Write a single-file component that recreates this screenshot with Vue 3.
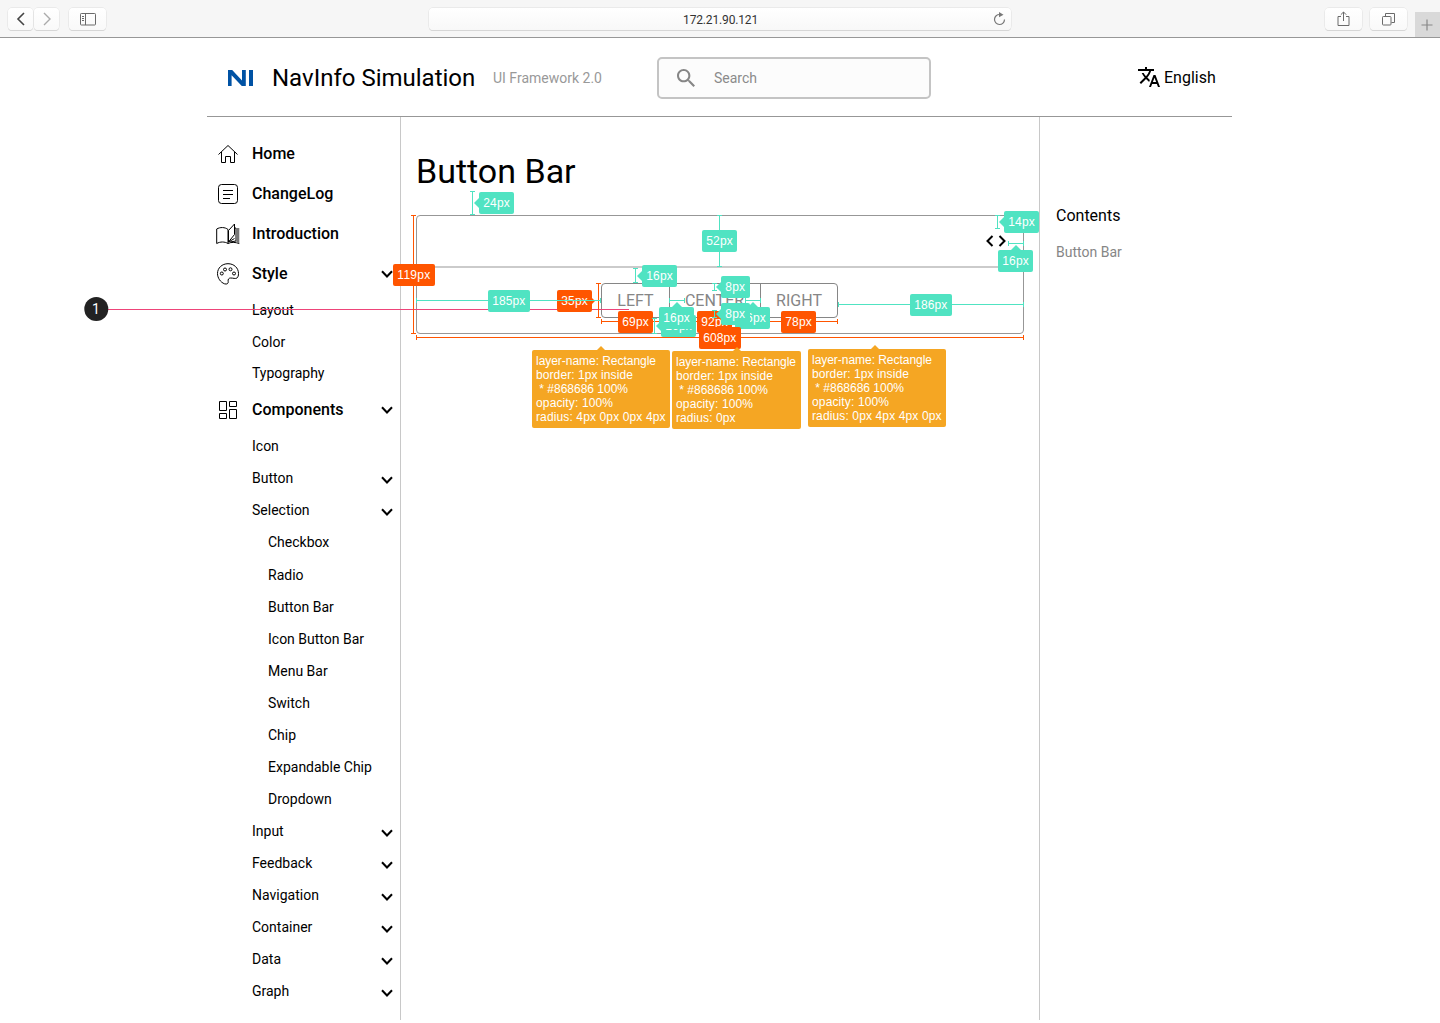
<script setup>
const menu = [
  { t: 'Home', k: 'major', i: 'home' },
  { t: 'ChangeLog', k: 'major', i: 'log' },
  { t: 'Introduction', k: 'major', i: 'book' },
  { t: 'Style', k: 'major', i: 'palette', open: true },
  { t: 'Layout', k: 'minor first' },
  { t: 'Color', k: 'minor' },
  { t: 'Typography', k: 'minor short' },
  { t: 'Components', k: 'major tall', i: 'grid', open: true },
  { t: 'Icon', k: 'minor' },
  { t: 'Button', k: 'minor', open: true },
  { t: 'Selection', k: 'minor', open: true },
  { t: 'Checkbox', k: 'minor leaf' },
  { t: 'Radio', k: 'minor leaf long' },
  { t: 'Button Bar', k: 'minor leaf' },
  { t: 'Icon Button Bar', k: 'minor leaf' },
  { t: 'Menu Bar', k: 'minor leaf' },
  { t: 'Switch', k: 'minor leaf' },
  { t: 'Chip', k: 'minor leaf' },
  { t: 'Expandable Chip', k: 'minor leaf' },
  { t: 'Dropdown', k: 'minor leaf' },
  { t: 'Input', k: 'minor', open: true },
  { t: 'Feedback', k: 'minor', open: true },
  { t: 'Navigation', k: 'minor', open: true },
  { t: 'Container', k: 'minor', open: true },
  { t: 'Data', k: 'minor', open: true },
  { t: 'Graph', k: 'minor', open: true }
]

const G = '#50e3c2'
const O = '#ff5500'

// dir h/v: ruler direction, p: cross position, a..b: extent, x/y: label corner,
// tip: label arrow as [side, x, y]
const marks = [
  { c: O, dir: 'v', p: 413, a: 215, b: 334, x: 393, y: 264, t: '119px' },
  { c: O, dir: 'v', p: 598, a: 283, b: 318, x: 557, y: 290, t: '35px', tip: ['r', 595, 301] },
  { c: G, dir: 'h', p: 300, a: 416, b: 601, x: 488, y: 290, t: '185px' },
  { c: G, dir: 'v', p: 472, a: 191, b: 215, x: 479, y: 192, t: '24px', tip: ['l', 474, 203] },
  { c: G, dir: 'v', p: 719, a: 215, b: 267, x: 702, y: 230, t: '52px' },
  { c: G, dir: 'v', p: 997, a: 215, b: 229, x: 1004, y: 211, t: '14px', tip: ['l', 999, 222] },
  { c: G, dir: 'h', p: 243, a: 1008, b: 1024, x: 998, y: 250, t: '16px', tip: ['u', 1016, 245] },
  { c: G, dir: 'v', p: 635, a: 268, b: 283, x: 642, y: 265, t: '16px', tip: ['l', 637, 276] },
  { c: O, dir: 'h', p: 321, a: 601, b: 670, x: 618, y: 311, t: '69px' },
  { c: O, dir: 'h', p: 321, a: 669, b: 761, x: 697, y: 311, t: '92px' },
  { c: O, dir: 'h', p: 321, a: 760, b: 838, x: 781, y: 311, t: '78px' },
  { c: G, dir: 'v', p: 654, a: 318, b: 334, x: 661, y: 315, t: '16px', tip: ['l', 656, 326] },
  { c: G, dir: 'h', p: 300, a: 669, b: 685, x: 659, y: 307, t: '16px', tip: ['u', 677, 302] },
  { c: G, dir: 'h', p: 300, a: 745, b: 761, x: 735, y: 307, t: '16px', tip: ['u', 753, 302] },
  { c: O, dir: 'h', p: 337, a: 416, b: 1024, x: 699, y: 327, t: '608px' },
  { c: G, dir: 'v', p: 714, a: 283, b: 291, x: 721, y: 276, t: '8px', tip: ['l', 716, 287] },
  { c: G, dir: 'v', p: 714, a: 310, b: 318, x: 721, y: 303, t: '8px', tip: ['l', 716, 314] },
  { c: G, dir: 'h', p: 304, a: 838, b: 1024, x: 910, y: 294, t: '186px' }
]
const labelW = { 3: 29, 4: 35, 5: 42 }
const textW = { 3: 19.7, 4: 26.4, 5: 33 }

function ruler(m) {
  const p = m.p + 0.5
  const a = m.a + 0.5
  const b = m.b - 0.5
  return m.dir === 'v'
    ? `M${p} ${m.a}V${m.b}M${p - 2.5} ${a}h5M${p - 2.5} ${b}h5`
    : `M${m.a} ${p}H${m.b}M${a} ${p - 2.5}v5M${b} ${p - 2.5}v5`
}
function arrow([side, x, y]) {
  if (side === 'l') return `M${x} ${y}l6 -6v12z`
  if (side === 'r') return `M${x} ${y}l-6 -6v12z`
  return `M${x} ${y}l6 6h-12z`
}

const body = ['layer-name: Rectangle', 'border: 1px inside', '\u00a0* #868686 100%', 'opacity: 100%']
const notes = [
  { x: 532, y: 350, w: 138, ax: 601, last: 'radius: 4px 0px 0px 4px', lw: 129.5 },
  { x: 672, y: 351, w: 129, ax: 737, last: 'radius: 0px', lw: 59.5 },
  { x: 808, y: 349, w: 138, ax: 875, last: 'radius: 0px 4px 4px 0px', lw: 129.5 }
]
const bodyW = [120, 96.9, 92, 77]
</script>

<template>
  <div class="screen">
    <div class="browser">
      <div class="nav">
        <span class="key back"><svg width="10" height="14" viewBox="0 0 10 14"><path d="M8 1L2 7l6 6" fill="none" stroke="#444" stroke-width="1.6" /></svg></span>
        <span class="key fwd"><svg width="10" height="14" viewBox="0 0 10 14"><path d="M2 1l6 6-6 6" fill="none" stroke="#aaa" stroke-width="1.4" /></svg></span>
      </div>
      <span class="key wide sidebar-key">
        <svg width="16" height="13" viewBox="0 0 16 13" fill="none" stroke="#6a6a6a"><rect x=".5" y=".5" width="15" height="11.500" rx=".8" /><path d="M5.500 1v11M2 3.500h2M2 5.500h2M2 7.500h2" /></svg>
      </span>
      <div class="address">
        <span>172.21.90.121</span>
        <svg class="reload" width="13" height="14" viewBox="0 0 13 14"><path d="M6.800 2.500A5 5 0 1 0 11.500 7.500" fill="none" stroke="#777" stroke-width="1.2" /><path d="M6 0l4.500 2.700L6 5.200z" fill="#777" /></svg>
      </div>
      <span class="key wide share">
        <svg width="13" height="16" viewBox="0 0 13 16" fill="none" stroke="#6a6a6a"><path d="M4 5.500H1v9h11v-9H9M6.500 10V1M3.800 3.700L6.500 1l2.700 2.700" /></svg>
      </span>
      <span class="key wide tabs">
        <svg width="13" height="13" viewBox="0 0 13 13" fill="none" stroke="#6a6a6a"><rect x=".5" y="3.500" width="8.500" height="8.500" rx=".8" /><path d="M3.500 3.500v-3h9v9h-3" /></svg>
      </span>
      <span class="plus"><svg width="12" height="12" viewBox="0 0 12 12"><path d="M6 .5v11M.5 6h11" stroke="#888" stroke-width="1.2" /></svg></span>
    </div>

    <div class="page">
      <header class="head">
        <svg class="logo" width="26" height="17" viewBox="0 0 26 17" fill="#0052a4"><path d="M0 16V0h4.200l9.800 10.500V0h3.800v16h-4L3.600 5.200V16zM21 0h4v16h-4z" /></svg>
        <span class="brand">NavInfo Simulation</span>
        <span class="version">UI Framework 2.0</span>
        <div class="search">
          <svg width="18" height="18" viewBox="3 3 17.500 17.500" fill="#868686"><path d="M15.500 14h-.79l-.28-.27C15.410 12.590 16 11.110 16 9.500 16 5.910 13.090 3 9.500 3S3 5.910 3 9.500 5.910 16 9.500 16c1.610 0 3.090-.59 4.230-1.570l.27.28v.79l5 4.990L20.490 19l-4.990-5zm-6 0C7.010 14 5 11.990 5 9.500S7.010 5 9.500 5 14 7.010 14 9.500 11.990 14 9.500 14z" /></svg>
          <span>Search</span>
        </div>
        <div class="lang">
          <svg width="24" height="24" viewBox="0 0 24 24"><path d="M12.870 15.070l-2.540-2.510.03-.03c1.740-1.940 2.980-4.170 3.710-6.530H17V4h-7V2H8v2H1v1.990h11.170C11.500 7.920 10.440 9.750 9 11.350 8.070 10.320 7.300 9.190 6.690 8h-2c.73 1.630 1.730 3.170 2.980 4.560l-5.090 5.020L4 19l5-5 3.110 3.110.76-2.040zM18.500 10h-2L12 22h2l1.120-3h4.750L21 22h2l-4.500-12zm-2.620 7l1.620-4.330L19.120 17h-3.240z" /></svg>
          <span>English</span>
        </div>
      </header>

      <div class="columns">
        <nav class="side">
          <div v-for="m in menu" :key="m.t + m.k" class="row" :class="m.k">
            <span class="ico">
              <svg v-if="m.i === 'home'" width="24" height="24" viewBox="0 0 24 24"><path d="M2.500 12.500L12 3.500l9.500 9M5.500 10v10.500h4v-6h5v6h4V10" /></svg>
              <svg v-else-if="m.i === 'log'" width="24" height="24" viewBox="0 0 24 24"><rect x="2.500" y="2.500" width="19" height="19" rx="3" /><path d="M7 8.500h10M7 12.500h10M7 16.500h7" /></svg>
              <svg v-else-if="m.i === 'book'" width="24" height="24" viewBox="0 0 24 24"><path d="M12 7.500C9 5 4 5 .7 7v14.500c3.500-2 8-2 11.300 0zM12 21.500c3-1.500 7-1.500 11.300 0" /><path d="M12.500 20V8.500L18.500 2v10.500zM12.500 20l6-3.500M18.500 6h1.500v13l-6 1" /><path d="M21.800 6v15" stroke="#777" stroke-width="3" /></svg>
              <svg v-else-if="m.i === 'palette'" width="24" height="24" viewBox="0 0 24 24"><path d="M12 1.700C6 1.700 1.500 6 1.500 11.500c0 4.500 3 8.800 7 10.300 2.500.8 4-.3 3.700-2.300-.4-2 .3-3.500 2.500-3.500 2.500 0 4.500 1 6.300 0 1-.7 1.500-2.500 1.500-4.500 0-5.500-4.500-9.800-10.500-9.800z" /><circle cx="5.800" cy="11.500" r="1.500" /><circle cx="9" cy="7.500" r="1.500" /><circle cx="14.500" cy="7.300" r="1.500" /><circle cx="18" cy="11.500" r="1.500" /></svg>
              <svg v-else-if="m.i === 'grid'" width="24" height="24" viewBox="0 0 24 24"><path d="M3.500 3.500h7v9h-7zM13.500 3.500h7v5h-7zM3.500 15.500h7v5h-7zM13.500 11.500h7v9h-7z" /></svg>
            </span>
            <span class="name">{{ m.t }}</span>
            <svg v-if="m.open" class="chev" width="12" height="9" viewBox="0 0 12 9"><path d="M1 1.200l5 5.300 5-5.300" /></svg>
          </div>
        </nav>

        <main class="main">
          <h1>Button Bar</h1>
          <section class="panel">
            <div class="panel-top">
              <svg width="20" height="12" viewBox="0 0 20 12"><path d="M6.500 1L1.500 6l5 5M13.500 1l5 5-5 5" fill="none" stroke="#000" stroke-width="2" /></svg>
            </div>
            <div class="panel-body">
              <div class="bar"><span class="b1">LEFT</span><span class="b2">CENTER</span><span class="b3">RIGHT</span></div>
            </div>
          </section>
        </main>

        <aside class="toc">
          <div class="toc-title">Contents</div>
          <div class="toc-link">Button Bar</div>
        </aside>
      </div>
    </div>

    <svg class="overlay" width="1440" height="1023" viewBox="0 0 1440 1023">
      <path d="M108 309.500H629" stroke="#ee4479" />
      <circle cx="96.300" cy="309" r="12" fill="#222" />
      <text class="pin" x="96" y="314" text-anchor="middle">1</text>
      <g v-for="(m, i) in marks" :key="i">
        <path :d="ruler(m)" :stroke="m.c" />
        <path v-if="m.tip" :d="arrow(m.tip)" :fill="m.c" />
        <rect :x="m.x" :y="m.y" :width="labelW[m.t.length]" height="22" rx="2" :fill="m.c" />
        <text :x="m.x + 4.300" :y="m.y + 15" :textLength="textW[m.t.length]">{{ m.t }}</text>
      </g>
      <path d="M557 300.500H601" :stroke="G" />
      <g v-for="n in notes" :key="n.x">
        <path :d="arrow(['u', n.ax, n.y - 4])" fill="#f5a623" />
        <rect :x="n.x" :y="n.y" :width="n.w" height="78" rx="2" fill="#f5a623" />
        <text v-for="(l, i) in body" :key="l" :x="n.x + 4" :y="n.y + 15 + i * 14" :textLength="bodyW[i]">{{ l }}</text>
        <text :x="n.x + 4" :y="n.y + 71" :textLength="n.lw">{{ n.last }}</text>
      </g>
    </svg>
  </div>
</template>

<style>
body { background: #fff; }
</style>

<style scoped>
.screen { position: relative; width: 1440px; height: 1023px; overflow: hidden; font-family: Roboto, sans-serif; color: #000; }
.browser { box-sizing: border-box; height: 38px; display: flex; align-items: flex-start; padding: 8px 0 0 8px; background: #f6f6f6; border-bottom: 1px solid #979797; }
.nav { display: flex; gap: 1px; margin-right: 10px; }
.key { display: flex; align-items: center; justify-content: center; width: 25px; height: 22px; border-radius: 4px; background: linear-gradient(#fff, #f9f9f9); box-shadow: 0 0 0 .5px #dedede, 0 1px 0 #cfcfcf; }
.key.wide { width: 37px; }
.sidebar-key svg { margin-left: 1px; }
.address { display: flex; align-items: center; justify-content: center; position: relative; width: 583px; height: 22px; margin-left: 323px; border-radius: 4px; background: linear-gradient(#fff, #f8f8f8); box-shadow: 0 0 0 .5px #dedede, 0 1px 0 #cfcfcf; font-size: 12px; color: #333; letter-spacing: -.15px; }
.address span { padding: 2px 0 0 1px; }
.reload { position: absolute; right: 5px; top: 4px; }
.share { margin-left: 314px; }
.tabs { margin-left: 8px; }
.plus { display: flex; align-items: center; justify-content: center; width: 25px; height: 25px; margin: 4px 0 0 8px; background: #d9d9d9; }
.plus svg { margin: 1px 2px 0 0; }
.page { width: 1025px; margin-left: 207px; }
.head { box-sizing: border-box; height: 79px; display: flex; align-items: center; border-bottom: 1px solid #979797; }
.logo { margin: 2px 0 0 21px; }
.brand { margin-left: 18px; width: 221px; padding-top: 2px; font-size: 24px; white-space: nowrap; }
.version { width: 164px; font-size: 14px; color: #999; letter-spacing: 0; padding-top: 2px; }
.search { box-sizing: border-box; display: flex; align-items: center; width: 274px; height: 42px; margin-top: 1px; padding-left: 18px; border: 2px solid #c4c4c4; border-radius: 5px; background: #fcfcfc; font-size: 14px; color: #8b8b8b; }
.search span { margin-left: 19px; }
.lang { display: flex; align-items: center; margin-left: 206px; font-size: 16px; }
.lang span { margin-left: 3px; }
.columns { display: flex; height: 903px; }
.side { box-sizing: border-box; width: 194px; padding-top: 16px; border-right: 1px solid #c8c8c8; }
.row { display: flex; align-items: center; height: 32px; font-size: 14px; }
.row.major { height: 40px; font-size: 16px; font-weight: 500; }
.row.major.tall { height: 41px; }
.row.first { margin-top: 1px; }
.row.short { height: 30px; margin-bottom: 1px; }
.row.long { height: 33px; }
.ico { width: 36px; height: 24px; margin-left: 9px; }
.major .ico { margin-top: 2px; }
.major.tall .ico { margin-top: 1px; }
.ico svg { fill: none; stroke: #000; stroke-width: 1; }
.leaf .ico { width: 52px; }
.name { flex: 1; white-space: nowrap; }
.chev { margin: 2px 7px 0 0; fill: none; stroke: #000; stroke-width: 2; }
.minor .chev { margin-top: 4px; }
.main { width: 638px; padding: 34px 0 0 15px; box-sizing: border-box; }
h1 { margin: 0 0 24px; font-size: 34px; line-height: 40px; font-weight: 400; }
.panel { box-sizing: border-box; width: 608px; height: 119px; border: 1px solid #979797; border-radius: 4px; }
.panel-top { box-sizing: border-box; height: 52px; display: flex; align-items: center; justify-content: flex-end; padding-right: 17px; border-bottom: 2px solid #cbcbcb; }
.panel-body { padding: 15px 0 0 184px; }
.bar { display: flex; color: #868686; font-size: 16px; }
.bar span { box-sizing: border-box; display: flex; align-items: center; justify-content: center; height: 35px; border: 1px solid #868686; }
.b1 { width: 69px; border-radius: 4px 0 0 4px; }
.bar .b2 { width: 92px; margin-left: -1px; padding-right: 1px; }
.b3 { width: 78px; margin-left: -1px; border-radius: 0 4px 4px 0; }
.toc { box-sizing: border-box; width: 193px; padding: 89px 0 0 16px; border-left: 1px solid #c8c8c8; }
.toc-title { font-size: 16px; line-height: 20px; }
.toc-link { margin-top: 17px; font-size: 14px; line-height: 18px; color: #868686; }
.overlay { position: absolute; left: 0; top: 0; pointer-events: none; fill: none; }
.overlay text { font-family: "Liberation Sans", Arial, sans-serif; font-size: 12px; fill: #fff; }
.overlay .pin { font-family: Roboto, sans-serif; font-size: 14px; }
</style>
